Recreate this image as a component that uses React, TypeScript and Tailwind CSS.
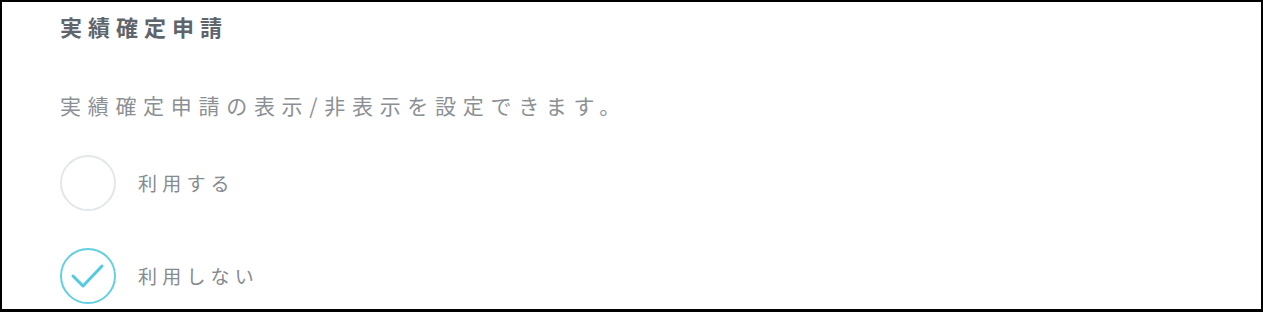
import { useState } from "react";

const options = [
  { id: "use", label: "利用する" },
  { id: "nouse", label: "利用しない" },
];

function Radio({ checked }: { checked: boolean }) {
  return (
    <span
      className={
        checked
          ? "flex h-[56px] w-[56px] shrink-0 items-center justify-center rounded-full border-2 border-[#62d0e2]"
          : "flex h-[56px] w-[56px] shrink-0 items-center justify-center rounded-full border-2 border-[#e4e7ea]"
      }
    >
      {checked && (
        <svg width="40" height="40" viewBox="0 0 40 40" fill="none">
          <path
            d="M5 20 L15 30 L34 10"
            stroke="#52cbe0"
            strokeWidth="3"
            strokeLinecap="round"
            strokeLinejoin="round"
          />
        </svg>
      )}
    </span>
  );
}

export default function App() {
  const [value, setValue] = useState("nouse");

  return (
    <div
      className="h-[312px] w-[1263px] overflow-hidden border-x-2 border-t-2 border-b-[3px] border-black bg-white pl-[58px]"
      style={{ fontFamily: '"Noto Sans CJK JP", "Noto Sans", sans-serif' }}
    >
      <h2 className="pt-[8px] text-[22px] leading-[32px] font-bold tracking-[6px] text-[#5f656b]">
        実績確定申請
      </h2>
      <p className="mt-[47px] text-[21px] leading-[32px] tracking-[6.7px] text-[#8b9095]">
        実績確定申請の表示/非表示を設定できます。
      </p>
      <div className="mt-[34px] flex flex-col gap-[37px]">
        {options.map((o) => (
          <label
            key={o.id}
            className="flex h-[56px] cursor-pointer items-center gap-[22px]"
            onClick={() => setValue(o.id)}
          >
            <Radio checked={value === o.id} />
            <span className="text-[19px] leading-[24px] tracking-[5.2px] text-[#858a8f]">
              {o.label}
            </span>
          </label>
        ))}
      </div>
    </div>
  );
}
